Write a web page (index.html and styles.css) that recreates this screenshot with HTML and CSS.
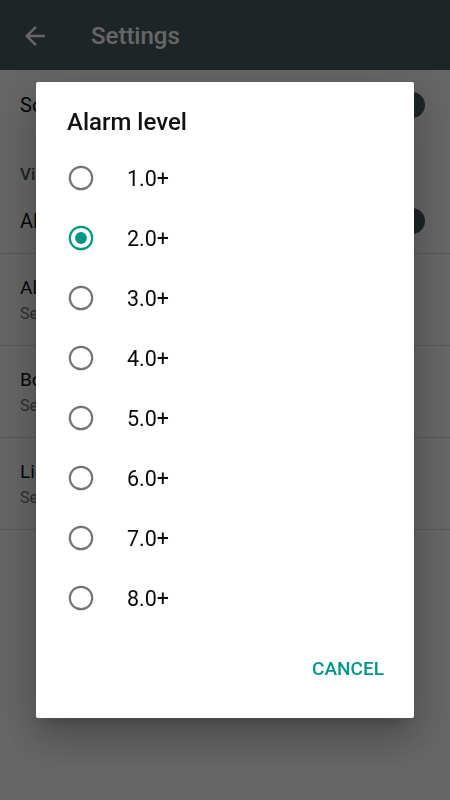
FILE: index.html
```html
<!DOCTYPE html>
<html lang="en">
<head>
<meta charset="utf-8">
<title>Settings</title>
<link rel="stylesheet" href="styles.css">
</head>
<body>
<div class="screen">
  <header class="toolbar">
    <svg class="back" viewBox="0 0 24 24" width="30" height="30" aria-hidden="true"><path d="M20 11H7.83l5.59-5.59L12 4l-8 8 8 8 1.41-1.41L7.83 13H20v-2z" fill="#fff"/></svg>
    <h1 class="toolbar-title">Settings</h1>
  </header>
  <main class="list">
    <div class="row row-switch row-first">
      <span class="row-title">Sound</span>
      <span class="switch"><span class="track"></span><span class="thumb"></span></span>
    </div>
    <div class="category">Vibrate</div>
    <div class="row row-switch row-divider">
      <span class="row-title">Alarm</span>
      <span class="switch"><span class="track"></span><span class="thumb"></span></span>
    </div>
    <div class="row two-line row-divider">
      <span class="row-title">Alert</span>
      <span class="row-sub">Set level</span>
    </div>
    <div class="row two-line row-divider">
      <span class="row-title">Border</span>
      <span class="row-sub">Set color</span>
    </div>
    <div class="row two-line row-divider">
      <span class="row-title">Light</span>
      <span class="row-sub">Set color</span>
    </div>
  </main>
</div>

<div class="scrim">
  <div class="dialog" role="dialog">
    <h2 class="dialog-title">Alarm level</h2>
    <ul class="options">
      <li class="option"><svg class="radio" viewBox="0 0 26 26" width="26" height="26"><circle cx="13" cy="13" r="11.2" class="ring"/></svg><span class="label">1.0+</span></li>
      <li class="option checked"><svg class="radio" viewBox="0 0 26 26" width="26" height="26"><circle cx="13" cy="13" r="11.2" class="ring"/><circle cx="13" cy="13" r="5.9" class="dot"/></svg><span class="label">2.0+</span></li>
      <li class="option"><svg class="radio" viewBox="0 0 26 26" width="26" height="26"><circle cx="13" cy="13" r="11.2" class="ring"/></svg><span class="label">3.0+</span></li>
      <li class="option"><svg class="radio" viewBox="0 0 26 26" width="26" height="26"><circle cx="13" cy="13" r="11.2" class="ring"/></svg><span class="label">4.0+</span></li>
      <li class="option"><svg class="radio" viewBox="0 0 26 26" width="26" height="26"><circle cx="13" cy="13" r="11.2" class="ring"/></svg><span class="label">5.0+</span></li>
      <li class="option"><svg class="radio" viewBox="0 0 26 26" width="26" height="26"><circle cx="13" cy="13" r="11.2" class="ring"/></svg><span class="label">6.0+</span></li>
      <li class="option"><svg class="radio" viewBox="0 0 26 26" width="26" height="26"><circle cx="13" cy="13" r="11.2" class="ring"/></svg><span class="label">7.0+</span></li>
      <li class="option"><svg class="radio" viewBox="0 0 26 26" width="26" height="26"><circle cx="13" cy="13" r="11.2" class="ring"/></svg><span class="label">8.0+</span></li>
    </ul>
    <div class="actions">
      <span class="btn">CANCEL</span>
    </div>
  </div>
</div>
</body>
</html>
```

FILE: styles.css
```css
* { box-sizing: border-box; }

html, body {
  margin: 0;
  padding: 0;
  width: 450px;
  height: 800px;
  overflow: hidden;
  background: #fff;
  font-family: Roboto, "Noto Sans", "Liberation Sans", sans-serif;
}

.screen {
  width: 450px;
  height: 800px;
  background: #fff;
}

.toolbar {
  height: 70px;
  background: #4b5d63;
  display: flex;
  align-items: center;
  padding-left: 20px;
}

.back {
  display: block;
  flex: none;
  margin-top: 1px;
}

.toolbar-title {
  margin: 0 0 0 41px;
  font-size: 24px;
  font-weight: 500;
  color: #fff;
  line-height: 32px;
  padding-top: 2px;
}

.list {
  display: flex;
  flex-direction: column;
}

.row {
  padding: 0 25px 0 20px;
  color: #111;
}

.row-switch {
  display: flex;
  align-items: center;
  justify-content: space-between;
}

.row-first { height: 70px; }

.row-switch.row-divider { height: 65px; }

.row-divider { border-bottom: 1px solid #dcdcdc; }

.row-title {
  font-size: 20px;
  line-height: 24px;
  white-space: nowrap;
}

.two-line {
  height: 92px;
  display: flex;
  flex-direction: column;
  gap: 4px;
  padding-top: 22px;
}

.two-line .row-title { font-size: 19px; }

.row-sub {
  font-size: 16px;
  line-height: 20px;
  color: #757575;
  white-space: nowrap;
}

.category {
  height: 49px;
  padding: 24px 20px 5px;
  font-size: 17px;
  line-height: 20px;
  font-weight: 500;
  color: #4b5d63;
}

.switch {
  position: relative;
  width: 40px;
  height: 26px;
  flex: none;
}

.track {
  position: absolute;
  left: 2px;
  right: 2px;
  top: 6px;
  height: 14px;
  border-radius: 7px;
  background: #a3adb1;
}

.thumb {
  position: absolute;
  right: 0;
  top: 0;
  width: 26px;
  height: 26px;
  border-radius: 50%;
  background: #4b5d63;
}

.scrim {
  position: fixed;
  inset: 0;
  background: rgba(0, 0, 0, 0.6);
  display: flex;
  align-items: center;
  justify-content: center;
}

.dialog {
  width: 378px;
  height: 636px;
  background: #fff;
  border-radius: 2px;
  padding-top: 24px;
  box-shadow: 0 11px 15px -7px rgba(0,0,0,0.2), 0 24px 38px 3px rgba(0,0,0,0.14), 0 9px 46px 8px rgba(0,0,0,0.12);
  display: flex;
  flex-direction: column;
}

.dialog-title {
  margin: 0 0 10px;
  padding-left: 31px;
  font-size: 24px;
  line-height: 32px;
  font-weight: 500;
  color: #111;
}

.options {
  list-style: none;
  margin: 0;
  padding: 0;
}

.option {
  height: 60px;
  display: flex;
  align-items: center;
  padding-left: 32px;
}

.radio {
  display: block;
  flex: none;
}

.ring {
  fill: none;
  stroke: #757575;
  stroke-width: 2.2;
}

.checked .ring { stroke: #009688; }

.dot { fill: #009688; }

.label {
  margin-left: 33px;
  font-size: 21.5px;
  line-height: 24px;
  color: #0a0a0a;
  padding-top: 2px;
}

.actions {
  display: flex;
  justify-content: flex-end;
  padding: 29px 30px 0 0;
}

.btn {
  font-size: 19px;
  line-height: 24px;
  font-weight: 500;
  color: #009688;
}
```
